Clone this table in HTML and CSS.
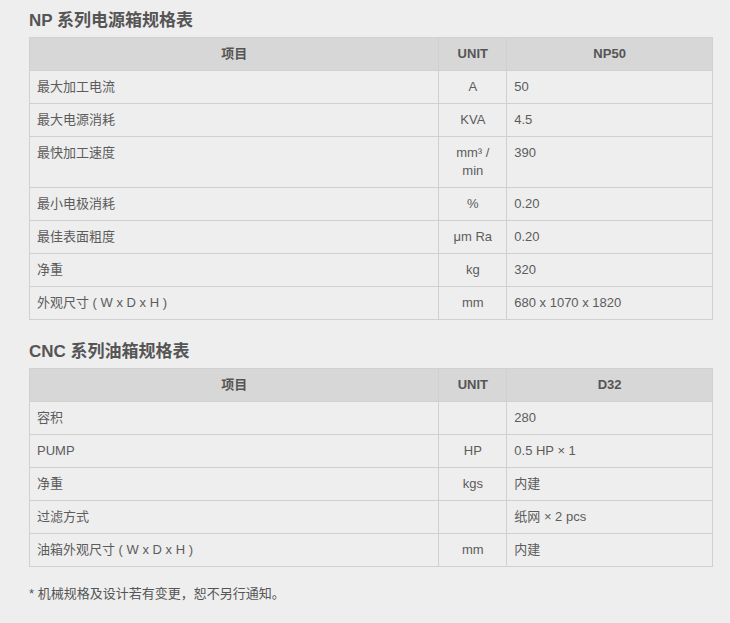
FILE: index.html
```html
<!DOCTYPE html>
<html lang="zh-CN">
<head>
<meta charset="utf-8">
<title>规格表</title>
<link rel="stylesheet" href="styles.css">
</head>
<body>
<div class="page">
  <h2 class="title">NP 系列电源箱规格表</h2>
  <table class="spec">
    <colgroup><col class="c1"><col class="c2"><col class="c3"></colgroup>
    <thead>
      <tr><th>项目</th><th>UNIT</th><th>NP50</th></tr>
    </thead>
    <tbody>
      <tr><td>最大加工电流</td><td class="unit">A</td><td>50</td></tr>
      <tr><td>最大电源消耗</td><td class="unit">KVA</td><td>4.5</td></tr>
      <tr><td>最快加工速度</td><td class="unit">mm³ /<br>min</td><td>390</td></tr>
      <tr><td>最小电极消耗</td><td class="unit">%</td><td>0.20</td></tr>
      <tr><td>最佳表面粗度</td><td class="unit">μm Ra</td><td>0.20</td></tr>
      <tr><td>净重</td><td class="unit">kg</td><td>320</td></tr>
      <tr><td>外观尺寸 ( W x D x H )</td><td class="unit">mm</td><td>680 x 1070 x 1820</td></tr>
    </tbody>
  </table>

  <h2 class="title second">CNC 系列油箱规格表</h2>
  <table class="spec">
    <colgroup><col class="c1"><col class="c2"><col class="c3"></colgroup>
    <thead>
      <tr><th>项目</th><th>UNIT</th><th>D32</th></tr>
    </thead>
    <tbody>
      <tr><td>容积</td><td class="unit"></td><td>280</td></tr>
      <tr><td>PUMP</td><td class="unit">HP</td><td>0.5 HP × 1</td></tr>
      <tr><td>净重</td><td class="unit">kgs</td><td>内建</td></tr>
      <tr><td>过滤方式</td><td class="unit"></td><td>纸网 × 2 pcs</td></tr>
      <tr><td>油箱外观尺寸 ( W x D x H )</td><td class="unit">mm</td><td>内建</td></tr>
    </tbody>
  </table>

  <p class="note">* 机械规格及设计若有变更，恕不另行通知。</p>
</div>
</body>
</html>
```

FILE: styles.css
```css
html, body {
  margin: 0;
  padding: 0;
  background: #eeeeee;
}

body {
  font-family: "Liberation Sans", "Noto Sans CJK SC", sans-serif;
  color: #555555;
}

.page {
  padding: 11px 18px 0 29px;
}

.title {
  margin: 0 0 6px 0;
  font-size: 17px;
  line-height: 20px;
  font-weight: bold;
  color: #555555;
}

.title.second {
  margin-top: 22px;
}

.spec {
  width: 684px;
  border-collapse: collapse;
  font-size: 13px;
  line-height: 18px;
}

.spec .c1 { width: 410px; }
.spec .c2 { width: 68px; }
.spec .c3 { width: 206px; }

.spec th,
.spec td {
  border: 1px solid #d0d0d0;
  padding: 7px 7px;
  vertical-align: top;
  text-align: left;
  color: #5c5c5c;
}

.spec th {
  background: #d7d7d7;
  text-align: center;
  font-weight: bold;
  color: #555555;
}

.spec td.unit {
  text-align: center;
  padding-left: 4px;
  padding-right: 4px;
}

.note {
  margin: 18px 0 0 0;
  font-size: 13px;
  line-height: 18px;
  color: #555555;
}
```
